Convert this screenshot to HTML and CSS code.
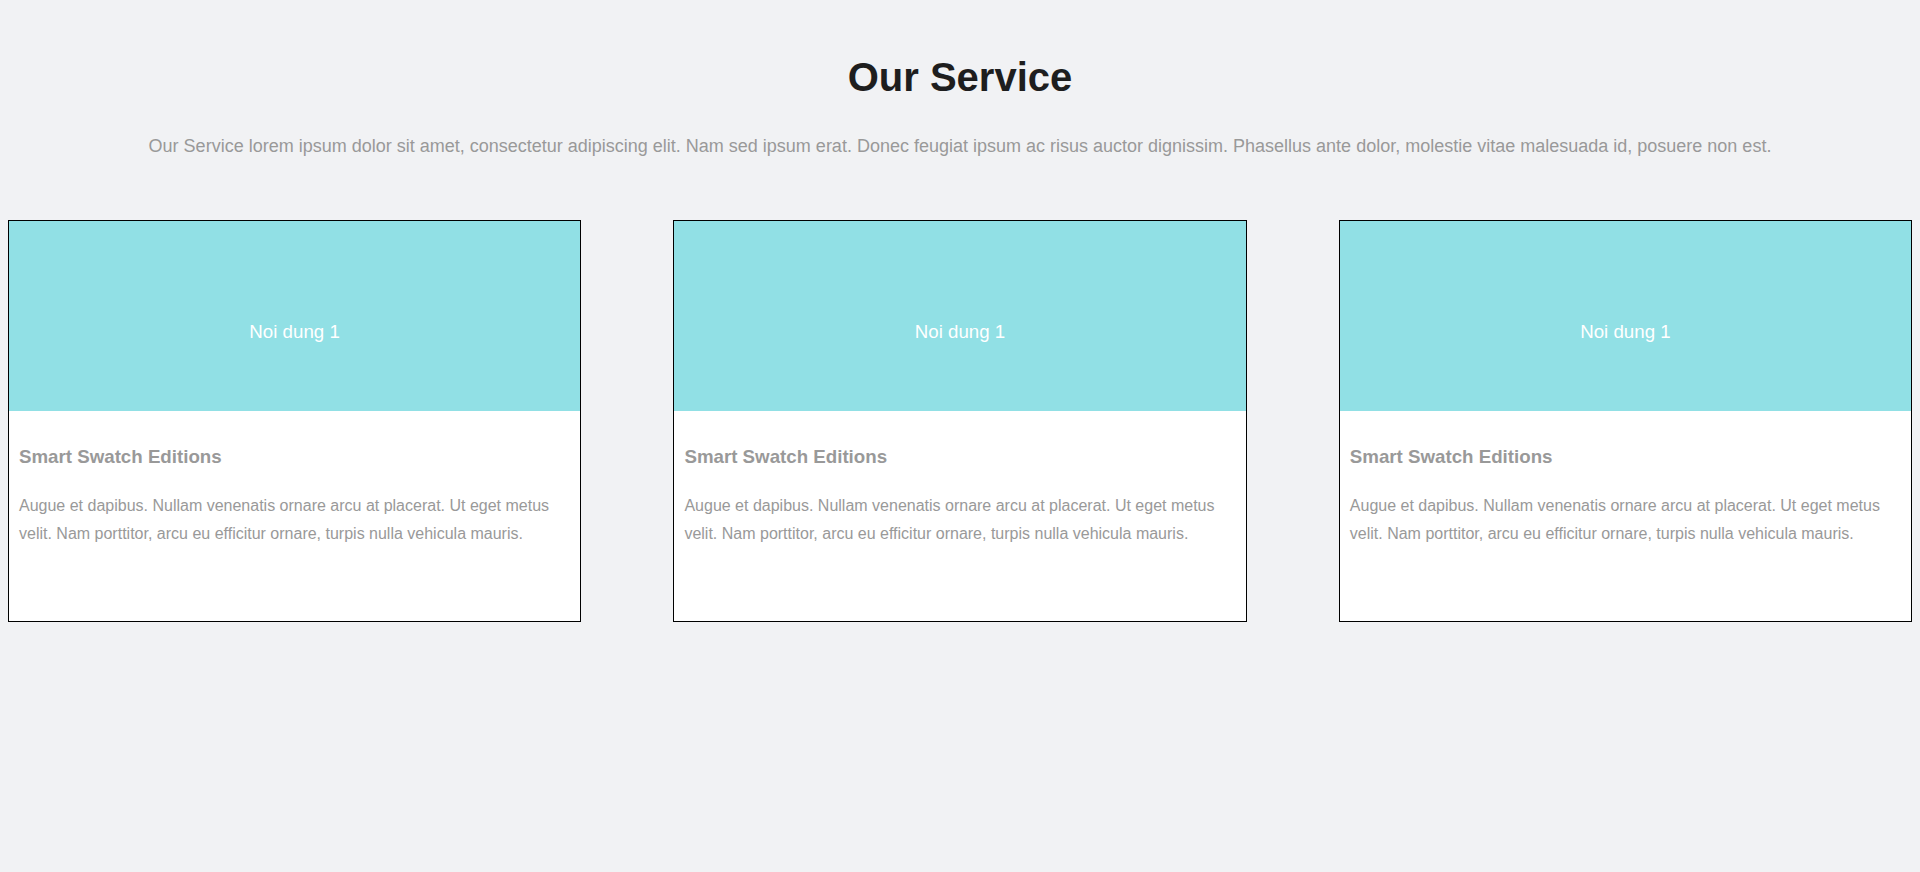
FILE: index.html
```html
<!DOCTYPE html>
<html lang="en">
<head>
<meta charset="utf-8">
<title>Our Service</title>
<link rel="stylesheet" href="styles.css">
</head>
<body>
<section class="service">
  <h1 class="service-title">Our Service</h1>
  <p class="service-lead">Our Service lorem ipsum dolor sit amet, consectetur adipiscing elit. Nam sed ipsum erat. Donec feugiat ipsum ac risus auctor dignissim. Phasellus ante dolor, molestie vitae malesuada id, posuere non est.</p>
  <div class="cards">
    <div class="card">
      <div class="card-media">Noi dung 1</div>
      <div class="card-body">
        <h3 class="card-title">Smart Swatch Editions</h3>
        <p class="card-text">Augue et dapibus. Nullam venenatis ornare arcu at placerat. Ut eget metus velit. Nam porttitor, arcu eu efficitur ornare, turpis nulla vehicula mauris.</p>
      </div>
    </div>
    <div class="card">
      <div class="card-media">Noi dung 1</div>
      <div class="card-body">
        <h3 class="card-title">Smart Swatch Editions</h3>
        <p class="card-text">Augue et dapibus. Nullam venenatis ornare arcu at placerat. Ut eget metus velit. Nam porttitor, arcu eu efficitur ornare, turpis nulla vehicula mauris.</p>
      </div>
    </div>
    <div class="card">
      <div class="card-media">Noi dung 1</div>
      <div class="card-body">
        <h3 class="card-title">Smart Swatch Editions</h3>
        <p class="card-text">Augue et dapibus. Nullam venenatis ornare arcu at placerat. Ut eget metus velit. Nam porttitor, arcu eu efficitur ornare, turpis nulla vehicula mauris.</p>
      </div>
    </div>
  </div>
</section>
</body>
</html>
```
FILE: styles.css
```css
html, body {
  background: #f1f2f4;
}
body {
  margin: 8px;
  font-family: "Liberation Sans", Arial, sans-serif;
}
.service {
  padding-top: 47px;
  text-align: center;
}
.service-title {
  margin: 0;
  font-size: 40px;
  font-weight: 700;
  color: #1e1e1e;
}
.service-lead {
  margin: 36px 0 0;
  font-size: 18px;
  color: #999;
}
.cards {
  margin-top: 63px;
  display: flex;
  justify-content: space-between;
  text-align: left;
}
.card {
  width: 30%;
  height: 400px;
  border: 1px solid #000;
  background: #fff;
}
.card-media {
  height: 190px;
  box-sizing: border-box;
  padding-top: 100px;
  background: #91e0e5;
  color: #fff;
  font-size: 18.72px;
  text-align: center;
}
.card-body {
  padding: 35px 10px 0;
}
.card-title {
  margin: 0;
  font-size: 18.72px;
  font-weight: 700;
  color: #999;
}
.card-text {
  margin: 24px 0 0;
  font-size: 16px;
  line-height: 28px;
  color: #999;
}
```
